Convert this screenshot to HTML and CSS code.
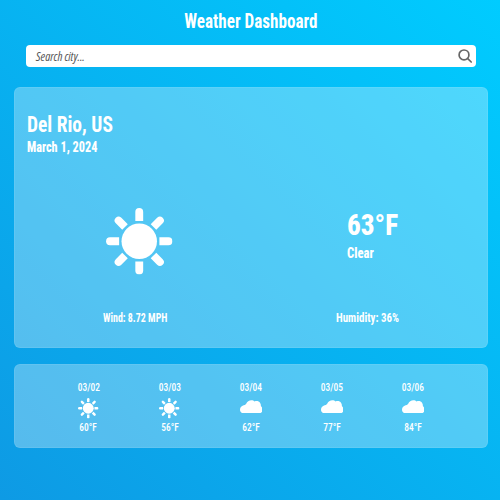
FILE: index.html
```
<!DOCTYPE html>
<html lang="en">
<head>
<meta charset="utf-8">
<title>Weather Dashboard</title>
<link rel="stylesheet" href="styles.css">
</head>
<body>
<svg class="sprite" aria-hidden="true">
  <symbol id="sun" viewBox="0 0 66 66">
    <circle cx="33" cy="33" r="17.6"/>
    <g id="rays">
      <path id="ray" d="M29.1 13V4a3.9 3.9 0 0 1 7.8 0v9z"/>
      <use href="#ray" transform="rotate(45 33 33)"/>
      <use href="#ray" transform="rotate(90 33 33)"/>
      <use href="#ray" transform="rotate(135 33 33)"/>
      <use href="#ray" transform="rotate(180 33 33)"/>
      <use href="#ray" transform="rotate(225 33 33)"/>
      <use href="#ray" transform="rotate(270 33 33)"/>
      <use href="#ray" transform="rotate(315 33 33)"/>
    </g>
  </symbol>
  <symbol id="cloud" viewBox="0 0 67 40">
    <path d="M11 39.500C4.500 39.500 0 35 0 29C0 23 4 18.500 9 16.500C12 15 16 15 18.500 11C21 4 27 0.500 34 0.500C38 0.500 41 1.500 43.500 4C50 2 57 3.500 60 9C62 12 62.500 15 62 18C65.500 21 67 25 67 28.500C67 35 63 39.500 57 39.500Z"/>
  </symbol>
</svg>
<h1 class="title"><span>Weather Dashboard</span></h1>
<form class="search">
  <span class="search-hint">Search city...</span>
  <svg class="search-icon" viewBox="0 0 14 14"><circle cx="6" cy="5.900" r="4.900"/><path d="M9.500 9.400l3.700 3.600"/></svg>
</form>
<main class="card current">
  <h2 class="city"><span>Del Rio, US</span></h2>
  <p class="date"><span>March 1, 2024</span></p>
  <div class="now">
    <svg class="now-icon"><use href="#sun"/></svg>
    <div class="reading">
      <p class="temp"><span>63°F</span></p>
      <p class="sky"><span>Clear</span></p>
    </div>
  </div>
  <div class="stats">
    <p class="wind"><span>Wind: 8.72 MPH</span></p>
    <p class="humidity"><span>Humidity: 36%</span></p>
  </div>
</main>
<section class="card forecast">
  <div class="day"><span>03/02</span><svg class="icon"><use href="#sun"/></svg><span>60°F</span></div>
  <div class="day"><span>03/03</span><svg class="icon"><use href="#sun"/></svg><span>56°F</span></div>
  <div class="day"><span>03/04</span><svg class="icon cloud"><use href="#cloud"/></svg><span>62°F</span></div>
  <div class="day"><span>03/05</span><svg class="icon cloud"><use href="#cloud"/></svg><span>77°F</span></div>
  <div class="day"><span>03/06</span><svg class="icon cloud"><use href="#cloud"/></svg><span>84°F</span></div>
</section>
</body>
</html>
```
FILE: styles.css
```
* { box-sizing: border-box; margin: 0; padding: 0; }

body {
  height: 500px;
  padding: 0 12.5px 0 14px;
  overflow: hidden;
  background: linear-gradient(45deg, #0e9ae4, #00ccff);
  color: #fff;
  font-family: Roboto, "Liberation Sans", sans-serif;
  font-stretch: 75%;
  font-weight: 800;
  white-space: nowrap;
}

svg { display: block; fill: #fff; }
span { display: inline-block; transform-origin: left center; }
.sprite { position: absolute; width: 0; height: 0; }

.title { font-size: 20px; line-height: 43px; height: 45px; text-align: center; }
.title span { transform: scaleX(.855); transform-origin: center; }

.search {
  display: flex;
  align-items: center;
  justify-content: space-between;
  height: 21.5px;
  margin: 0 12px 20.5px;
  padding: 0 4px 0 9.5px;
  border-radius: 4px;
  background: #fff;
  color: #555;
}
.search-hint { font: italic 400 12.5px/21px "Open Sans", sans-serif; font-stretch: 75%; transform: scaleX(.98); padding-top: 1px; }
.search-icon { width: 14px; height: 14px; margin-top: 1px; fill: none; stroke: #666; stroke-width: 1.7; stroke-linecap: round; }

.card {
  border: 1px solid rgba(255, 255, 255, .08);
  border-radius: 6px;
  background: rgba(255, 255, 255, .3);
}

.current { height: 260.5px; padding: 24px 12px 0; }
.city { font-size: 22.5px; line-height: 25px; }
.city span { transform: scaleX(.865); }
.date { font-size: 14.5px; line-height: 22px; }
.date span { transform: scaleX(.842); }

.now { display: grid; grid-template-columns: 240.5px 1fr; height: 149px; padding: 49px 0 0 79px; }
.now-icon { width: 66.5px; height: 66.5px; }
.temp { font-size: 30px; line-height: 34px; }
.temp span { transform: scaleX(.905); }
.sky { font-size: 14.5px; line-height: 24px; }
.sky span { transform: scaleX(.875); }

.stats { display: grid; grid-template-columns: 233.5px 1fr; padding-left: 75.5px; font-size: 12.3px; font-weight: 700; line-height: 21px; }
.wind span { transform: scaleX(.81); }
.humidity span { transform: scaleX(.89); }

.forecast { display: flex; justify-content: center; height: 84px; margin-top: 16.5px; padding: 15px 0 0; }
.day { display: flex; flex-direction: column; align-items: center; width: 81.2px; font-size: 11.8px; font-weight: 500; line-height: 14px; }
.day span { transform: scaleX(.8); transform-origin: center; }
.icon { width: 20.5px; height: 20.5px; margin: 4px 0 1px; }
.cloud { width: 22.5px; height: 13.5px; margin: 5.5px 0 6.5px; }
```
